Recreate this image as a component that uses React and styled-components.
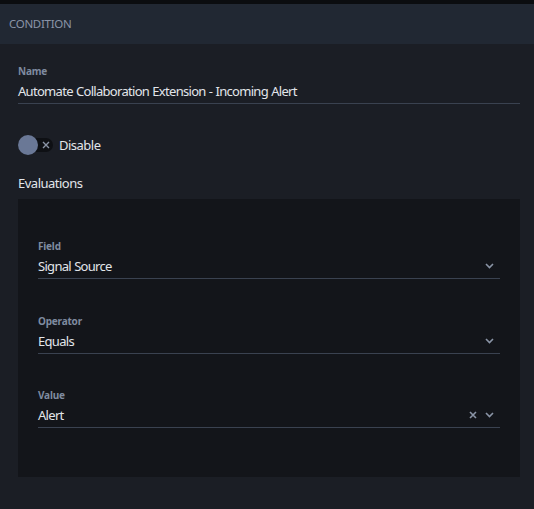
import React from "react";
import styled, { createGlobalStyle } from "styled-components";

const Global = createGlobalStyle`
  html, body { margin: 0; padding: 0; background: #1b1e25; }
  body { font-family: "Noto Sans", "Open Sans", sans-serif; -webkit-font-smoothing: antialiased; }
`;

const Page = styled.div`
  width: 534px;
  height: 509px;
  background: #1b1e25;
  border-top: 4px solid #0b0d10;
  box-sizing: border-box;
  display: flex;
  flex-direction: column;
`;

const Header = styled.div`
  height: 40px;
  background: #212833;
  display: flex;
  align-items: center;
  padding-left: 9px;
  padding-bottom: 1px;
  box-sizing: border-box;
  font-size: 11.5px;
  letter-spacing: -0.3px;
  color: #8a94a7;
`;

const Body = styled.div`
  padding: 20px 14px 0 18px;
  display: flex;
  flex-direction: column;
`;

const FieldWrap = styled.div`
  display: flex;
  flex-direction: column;
  margin-top: ${(p) => p.$gap || 0}px;
`;

const Label = styled.div`
  height: 16px;
  line-height: 15px;
  font-size: 10px;
  font-weight: 700;
  letter-spacing: -0.2px;
  color: #7f8ba0;
`;

const InputRow = styled.div`
  height: 24px;
  padding-bottom: 2px;
  box-sizing: border-box;
  border-bottom: 1px solid #3a4250;
  display: flex;
  align-items: center;
  font-size: 13px;
  letter-spacing: -0.7px;
  word-spacing: 0.5px;
  color: #e2e5ea;
`;

const Value = styled.span`
  flex: 1;
`;

const Icons = styled.div`
  display: flex;
  align-items: center;
  gap: 8px;
  padding-right: 6px;
  color: #8a94a6;
`;

const ToggleRow = styled.div`
  margin-top: 31px;
  height: 20px;
  display: flex;
  align-items: center;
  gap: 6px;
  font-size: 13px;
  letter-spacing: -0.5px;
  color: #e2e5ea;
`;

const Track = styled.div`
  position: relative;
  width: 35px;
  height: 14px;
  border-radius: 7px;
  background: #0e1014;
  display: flex;
  align-items: center;
  justify-content: flex-end;
  padding-right: 3px;
  box-sizing: border-box;
  color: #8a94a6;
`;

const Thumb = styled.div`
  position: absolute;
  left: 0;
  top: -3px;
  width: 20px;
  height: 20px;
  border-radius: 50%;
  background: #6a7896;
`;

const SectionTitle = styled.div`
  margin-top: 20px;
  height: 18px;
  line-height: 16px;
  font-size: 13px;
  letter-spacing: -0.5px;
  color: #e2e5ea;
`;

const Panel = styled.div`
  margin-top: 6px;
  height: 278px;
  box-sizing: border-box;
  background: #13151a;
  padding: 40px 20px 0 20px;
  display: flex;
  flex-direction: column;
`;

const Chevron = () => (
  <svg width="9" height="6" viewBox="0 0 9 6" fill="none">
    <path d="M1 1l3.5 3.5L8 1" stroke="currentColor" strokeWidth="1.6" />
  </svg>
);

const Cross = ({ size = 8, w = 1.6 }) => (
  <svg width={size} height={size} viewBox="0 0 8 8" fill="none">
    <path d="M1 1l6 6M7 1L1 7" stroke="currentColor" strokeWidth={w} />
  </svg>
);

const Field = ({ label, value, clearable, select, gap }) => (
  <FieldWrap $gap={gap}>
    <Label>{label}</Label>
    <InputRow>
      <Value>{value}</Value>
      {select && (
        <Icons>
          {clearable && <Cross />}
          <Chevron />
        </Icons>
      )}
    </InputRow>
  </FieldWrap>
);

export default function App() {
  return (
    <Page>
      <Global />
      <Header>CONDITION</Header>
      <Body>
        <Field label="Name" value="Automate Collaboration Extension - Incoming Alert" />
        <ToggleRow>
          <Track>
            <Thumb />
            <Cross size={8} w={1.4} />
          </Track>
          Disable
        </ToggleRow>
        <SectionTitle>Evaluations</SectionTitle>
        <Panel>
          <Field label="Field" value="Signal Source" select />
          <Field label="Operator" value="Equals" select gap={35} />
          <Field label="Value" value="Alert" select clearable gap={34} />
        </Panel>
      </Body>
    </Page>
  );
}
